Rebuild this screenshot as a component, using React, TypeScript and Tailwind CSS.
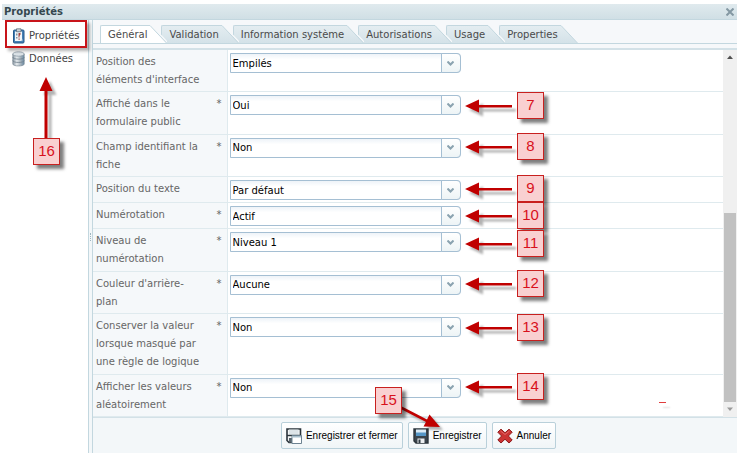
import { useState } from 'react'

const tabs = ['Général', 'Validation', 'Information système', 'Autorisations', 'Usage', 'Properties']

const fields = [
  { id: 'position', label: "Position des éléments d'interface", required: false, value: 'Empilés' },
  { id: 'public', label: 'Affiché dans le formulaire public', required: true, value: 'Oui' },
  { id: 'identifiant', label: 'Champ identifiant la fiche', required: true, value: 'Non' },
  { id: 'texte', label: 'Position du texte', required: false, value: 'Par défaut' },
  { id: 'numerotation', label: 'Numérotation', required: true, value: 'Actif' },
  { id: 'niveau', label: 'Niveau de numérotation', required: true, value: 'Niveau 1' },
  { id: 'couleur', label: "Couleur d'arrière-plan", required: true, value: 'Aucune' },
  { id: 'conserver', label: 'Conserver la valeur lorsque masqué par une règle de logique', required: true, value: 'Non' },
  { id: 'aleatoire', label: 'Afficher les valeurs aléatoirement', required: true, value: 'Non' },
]

// numbered notes pinned over the dialog
const rowNotes = [
  { n: 7, top: 92 },
  { n: 8, top: 133 },
  { n: 9, top: 175 },
  { n: 10, top: 202 },
  { n: 11, top: 230 },
  { n: 12, top: 270 },
  { n: 13, top: 314 },
  { n: 14, top: 373 },
]

function PropertiesIcon() {
  return (
    <svg width="16" height="16" viewBox="0 0 16 16" className="shrink-0">
      <rect x="1.500" y="2" width="10.500" height="13" rx="1" fill="#4580b5" stroke="#24598c" />
      <path d="M3 3.500h7V13H3z" fill="#f1f6f9" />
      <path d="M9 13l1.500-2.500V13z" fill="#b5c9d8" />
      <path d="M4.500.800h4.500v3H4.500z" fill="#c9d2d8" stroke="#54636f" strokeWidth=".7" />
      <path d="M4 5.500h1.500v2H4zM4 9h1.500v1.500H4z" fill="#8794a0" />
      <path d="M6.500 5h2v1.500l-1 1.500V9.500h-1V7.500zM6.500 10.500h1.200v1.200H6.500z" fill="#a0413f" />
    </svg>
  )
}

function DataIcon() {
  return (
    <svg width="16" height="16" viewBox="0 0 16 16" className="shrink-0">
      <defs>
        <linearGradient id="cyl" x1="0" x2="1" y1="0" y2="0">
          <stop offset="0" stopColor="#8a98a4" />
          <stop offset=".35" stopColor="#e6ebee" />
          <stop offset=".7" stopColor="#a4b1bb" />
          <stop offset="1" stopColor="#6688a3" />
        </linearGradient>
      </defs>
      <path d="M.8 3v10c0 2.600 11.400 2.600 11.400 0V3z" fill="url(#cyl)" stroke="#7d8b96" strokeWidth=".7" />
      <ellipse cx="6.500" cy="3" rx="5.700" ry="2.200" fill="#dbe2e7" stroke="#8695a0" strokeWidth=".7" />
      <path
        d="M.8 6.200c0 2.600 11.400 2.600 11.400 0M.8 9.500c0 2.600 11.400 2.600 11.400 0"
        fill="none"
        stroke="#6f7e8a"
        strokeWidth=".8"
      />
    </svg>
  )
}

function SaveIcon({ windowed = false }: { windowed?: boolean }) {
  return (
    <svg width="16" height="16" viewBox="0 0 16 16" className="shrink-0">
      {windowed ? (
        <>
          <path d="M1 1h13.500v13.500H3L1 12.500z" fill="#f4f6f7" stroke="#2b343b" strokeWidth="1.600" />
          <path d="M3 1.500h9.500V7H3z" fill="#dde4e8" />
          <path d="M1 7.500h13.500" stroke="#2b343b" strokeWidth="1.400" />
          <path d="M3 10h3v4.500H3z" fill="#59646c" />
          <path d="M6 7.500h9.500v8H6z" fill="#fff" stroke="#6d8392" />
          <path d="M6.500 8h8.500v1.500H6.500z" fill="#a9bfcc" />
        </>
      ) : (
        <>
          <path d="M1 1h14v14H3l-2-2z" fill="#3a444c" stroke="#2b343b" strokeWidth="1.400" />
          <path d="M3 1.500h10V8H3z" fill="#dcebf5" />
          <path d="M3 4.500h10V8H3z" fill="#5596c6" />
          <path d="M4.500 10.500h7V15h-7z" fill="#eceff1" />
          <path d="M5.500 11.500h2V15h-2z" fill="#2f3a43" />
        </>
      )}
    </svg>
  )
}

function CancelIcon() {
  return (
    <svg width="16" height="16" viewBox="0 0 16 16" className="shrink-0">
      <path
        d="M4 1.200 8 4.800l4-3.600 3.200 3L11.400 8l3.800 4-3.200 3-4-3.800L4 15l-3.200-3 3.800-4L.8 4.200z"
        fill="#cb3434"
        stroke="#8e1a1a"
        strokeLinejoin="round"
      />
      <path d="M3.500 3 8 6.500 12.500 3" fill="none" stroke="#e06a6a" />
    </svg>
  )
}

function Badge({ n }: { n: number }) {
  return (
    <span className="flex size-[27px] items-center justify-center border border-[#c8201f] bg-[#f9d0d1] font-['Liberation_Sans',sans-serif] text-[15px] text-[#d8101c] shadow-[4px_4px_3px_rgba(0,0,0,0.5)]">
      {n}
    </span>
  )
}

function LeftArrow() {
  return (
    <svg width="48" height="14" viewBox="0 0 48 14" className="drop-shadow-[4px_4px_1px_rgba(0,0,0,0.3)]">
      <path d="M0 7 14 .5V6h33v2.500H14v5z" fill="#c00000" />
    </svg>
  )
}

function Field({ field }: { field: (typeof fields)[number] }) {
  return (
    <tr className="border-b border-[#dfeaee]">
      <th scope="row" className="w-[134px] border-r border-[#dfeaee] bg-[#f5f8fa] px-[3px] pt-[3px] pb-[2px] text-left align-top font-normal">
        <div className="flex justify-between">
          <label htmlFor={field.id} className="w-[106px] leading-[18px] text-[#666]">
            {field.label}
          </label>
          {field.required && <span className="pr-[2px] leading-[18px] text-[#666]">*</span>}
        </div>
      </th>
      <td className="px-[2px] pt-[3px] pb-[2px] align-top">
        <div className="relative h-5 w-[231px]">
          <select
            id={field.id}
            className="block h-5 w-full appearance-none rounded-r-sm border border-[#a5bfd3] bg-linear-to-b from-[#eef3f8] to-white to-30% pl-[2px] text-[10px] text-black"
          >
            <option>{field.value}</option>
          </select>
          <span className="pointer-events-none absolute inset-y-0 right-0 flex w-5 items-center justify-center rounded-r-sm border border-[#a5bfd3] bg-linear-to-b from-white to-[#edf4f6]">
            <svg width="7" height="5" viewBox="0 0 7 5">
              <path d="M.5.500 3.500 3.500 6.500.500" fill="none" stroke="#8ba3b0" strokeWidth="2" />
            </svg>
          </span>
        </div>
      </td>
    </tr>
  )
}

export default function App() {
  const [active, setActive] = useState(0)
  const action =
    "flex h-[27px] items-center gap-1 rounded-xs border border-[#b9d0da] bg-linear-to-b from-white to-[#f0f5f7] px-1 font-['Liberation_Sans',sans-serif] text-[10px] text-black"

  return (
    <div className="relative h-screen bg-white pt-1 pb-[6px] pl-[2px] font-['DejaVu_Sans',sans-serif] text-[10px]">
      <div className="flex h-full flex-col">
        <header className="flex h-4 items-center justify-between border-b border-[#c3d7df] bg-linear-to-b from-[#e0eaee] to-[#d0dfe5] pr-[3px] pl-[2px]">
          <h1 className="text-[10px] leading-3 font-bold text-[#34474f]">Propriétés</h1>
          <button type="button" aria-label="Fermer">
            <svg width="8" height="8" viewBox="0 0 8 8">
              <path d="M.5.500l7 7M7.500.500l-7 7" stroke="#8498a3" strokeWidth="2" />
            </svg>
          </button>
        </header>

        <div className="flex min-h-0 flex-1">
          <nav className="w-[86px] shrink-0 pt-1 text-[#444]">
            <a href="#proprietes" className="flex h-[23px] items-center gap-px pl-[10px]">
              <PropertiesIcon />
              Propriétés
            </a>
            <a href="#donnees" className="flex h-[23px] items-center gap-px pl-[10px]">
              <DataIcon />
              Données
            </a>
          </nav>

          <div className="flex w-[5px] shrink-0 items-center justify-center border-x border-[#c3d7df] bg-[#f3f7f9]">
            <span className="h-2 border-l border-dotted border-[#9fb5c0]" />
          </div>

          <main className="flex min-w-0 flex-1 flex-col">
            <div role="tablist" className="isolate flex h-[24px] shrink-0 items-end border-b border-[#c3d7df] bg-[#f6f8fa] pl-[7px]">
              {tabs.map((tab, i) => (
                <button
                  key={tab}
                  type="button"
                  role="tab"
                  aria-selected={i === active}
                  onClick={() => setActive(i)}
                  className="relative -mr-[6px] flex h-[18px]"
                  style={{ zIndex: tabs.length - i }}
                >
                  <span
                    className={`h-[18px] rounded-tl-xs border-t border-l border-[#c3d7df] pr-[2px] pl-[7px] leading-[18px] text-[#4a4a4a] ${
                      i === active ? 'bg-white' : 'bg-linear-to-b from-[#e4edf1] to-[#d4e2e8]'
                    }`}
                  >
                    {tab}
                  </span>
                  <svg width="18" height="18" viewBox="0 0 18 18">
                    <defs>
                      <linearGradient id="tab" x1="0" x2="0" y1="0" y2="1">
                        <stop offset="0" stopColor="#e4edf1" />
                        <stop offset="1" stopColor="#d4e2e8" />
                      </linearGradient>
                    </defs>
                    <path d="M0 .5h1L17.500 18H0z" fill={i === active ? '#fff' : 'url(#tab)'} />
                    <path d="M1 -1 19 18" fill="none" stroke="#f6f8fa" strokeWidth="1.500" />
                    <path d="M0 .5h1L17.500 18" fill="none" stroke="#c3d7df" />
                  </svg>
                </button>
              ))}
            </div>
            <div className="h-[6px] shrink-0 border-b-2 border-[#d3e1e7] bg-[#f6f8fa]" />

            <div className="flex min-h-0 flex-1">
              <table className="h-full w-full border-collapse">
                <tbody>
                  {fields.map((field) => (
                    <Field key={field.id} field={field} />
                  ))}
                </tbody>
              </table>
              <div className="flex w-[14px] shrink-0 flex-col items-center bg-[#f0f0f0]">
                <svg width="6" height="14" viewBox="0 0 6 14" className="shrink-0">
                  <path d="M0 9l3-3.500L6 9z" fill="#505050" />
                </svg>
                <div className="flex w-full flex-1 items-end pl-px">
                  <div className="h-[56%] w-3 bg-[#c1c1c1]" />
                </div>
                <svg width="6" height="15" viewBox="0 0 6 15" className="shrink-0">
                  <path d="M0 5.500h6L3 9z" fill="#9a9a9a" />
                </svg>
              </div>
            </div>

            <footer className="flex h-9 shrink-0 items-center justify-center gap-[5px] border-t border-[#d3e1e7] bg-[#f3f7f9] pl-[7px]">
              <button type="button" className={action}>
                <SaveIcon windowed />
                Enregistrer et fermer
              </button>
              <button type="button" className={action}>
                <SaveIcon />
                Enregistrer
              </button>
              <button type="button" className={action}>
                <CancelIcon />
                Annuler
              </button>
            </footer>
          </main>
        </div>
      </div>

      <div className="pointer-events-none absolute inset-0 z-10">
        <div className="absolute top-[20px] left-[5px] h-[28px] w-[82px] border-2 border-[#c8141a] shadow-[3px_3px_3px_rgba(0,0,0,0.3)]" />
        <svg width="14" height="62" viewBox="0 0 14 62" className="absolute top-[77px] left-[39px] drop-shadow-[4px_4px_1px_rgba(0,0,0,0.3)]">
          <path d="M7 0 13.500 14H8.500v47h-3V14h-5z" fill="#c00000" />
        </svg>
        <div className="absolute top-[138px] left-[33px]">
          <Badge n={16} />
        </div>
        {rowNotes.map((note) => (
          <div key={note.n} className="absolute left-[465px] flex items-center gap-1" style={{ top: note.top }}>
            <LeftArrow />
            <Badge n={note.n} />
          </div>
        ))}
        <svg width="44" height="30" viewBox="0 0 44 30" className="absolute top-[400px] left-[398px] drop-shadow-[3px_3px_1px_rgba(0,0,0,0.3)]">
          <path d="M1 5 29 19.500 31.500 14.500 42 27 25.500 26.500 28 22 0 7.500z" fill="#c00000" />
        </svg>
        <div className="absolute top-[387px] left-[375px]">
          <Badge n={15} />
        </div>
        <span className="absolute top-[402px] left-[659px] h-px w-[7px] bg-[#e03c3c] shadow-[4px_5px_2px_rgba(0,0,0,0.15)]" />
      </div>
    </div>
  )
}
